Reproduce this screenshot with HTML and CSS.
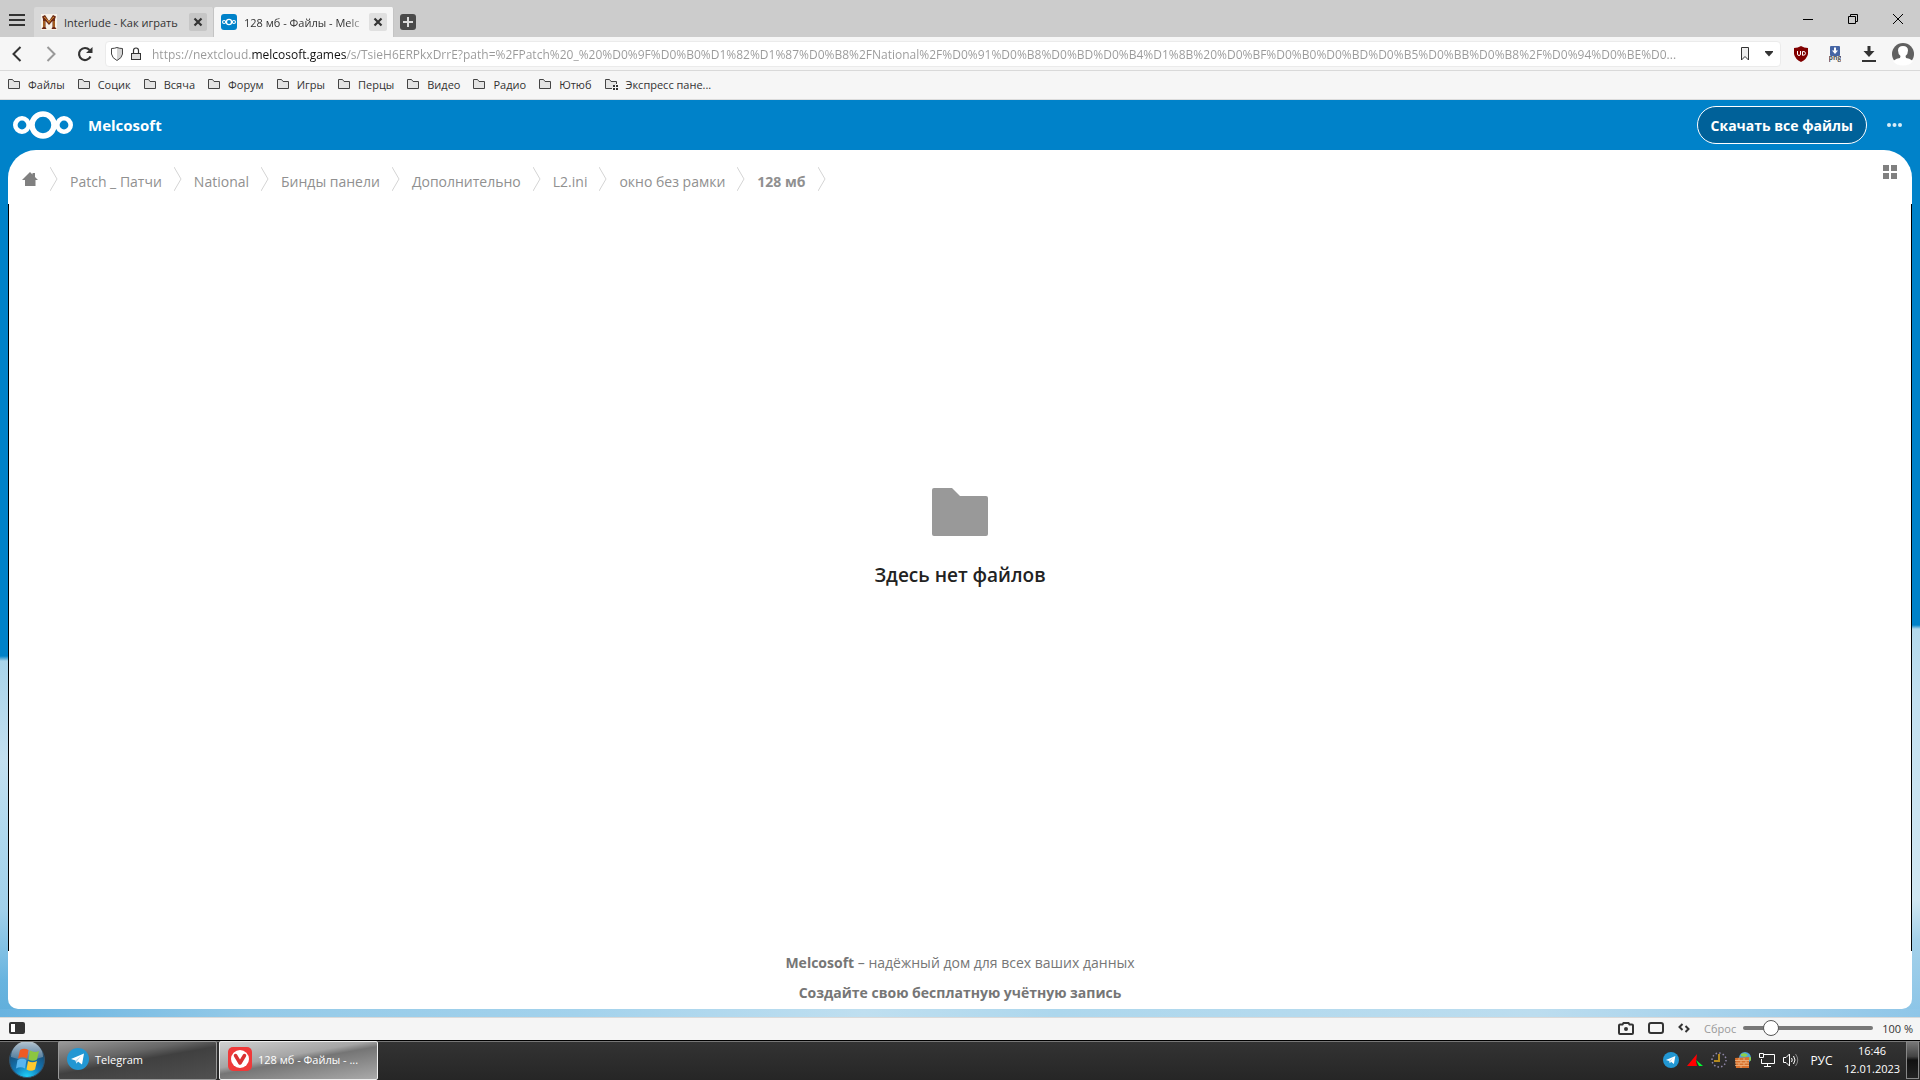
FILE: index.html
```
<!DOCTYPE html>
<html lang="ru">
<head>
    <meta charset="UTF-8">
    <meta name="viewport" content="width=device-width, initial-scale=1.0">
    <title>128 мб - Файлы - Melcosoft</title>
    <link rel="stylesheet" href="styles.css">
</head>
<body>
    <!-- shared shapes -->
    <svg class="defs" aria-hidden="true">
        <symbol id="folder" viewBox="0 0 12 10"><path d="M.5 9.500V.5H4.500L6 2.500H11.500V9.500Z" fill="#e4e4e4" stroke="#444"/></symbol>
        <symbol id="sep" viewBox="0 0 8 24"><path d="M0 0L7 12L0 24" fill="none" stroke="#d4d4d4"/></symbol>
        <symbol id="cross" viewBox="0 0 10 10"><path d="M1.500 1.500L8.500 8.500M8.500 1.500L1.500 8.500" stroke="#333" stroke-width="2.200"/></symbol>
        <symbol id="cloud" viewBox="0 0 60 28">
            <g fill="none" stroke="#fff"><circle cx="30" cy="14" r="11" stroke-width="5.500"/><circle cx="9" cy="14" r="6.700" stroke-width="4.600"/><circle cx="51" cy="14" r="6.700" stroke-width="4.600"/></g>
        </symbol>
        <symbol id="telegram" viewBox="0 0 22 22">
            <circle cx="11" cy="11" r="11" fill="#2297d3"/><path d="M4 11L17 5.500L15 16.500L11 13.500L9.500 15.500L8.500 12.500Z" fill="#fff"/><path d="M8.500 12.500L14 8L10 13.200L9.500 15.500Z" fill="#b9d9ec"/>
        </symbol>
    </svg>

    <!-- tabs -->
    <div class="tab-bar">
        <button class="menu-button" aria-label="Меню"><svg width="16" height="12"><path d="M0 1H16M0 6H16M0 11H16" stroke="#333" stroke-width="2"/></svg></button>
        <div class="tab">
            <svg width="16" height="16"><rect width="16" height="16" fill="#f7f1e8"/><path d="M1 2.500L4 1L8 7L12 1L15 2.500L14 5V13L15.500 15H10.500L11.500 13V7L8 11L4.500 7V13L5.500 15H.5L2 13V5Z" fill="#6d2a16"/><path d="M3 3L5 4.500L8 8.500L11 4.500L13 3M3 7V13M13 7V13" fill="none" stroke="#d98f2b"/></svg>
            <span class="tab-title">Interlude - Как играть</span>
            <button class="tab-close" aria-label="Закрыть вкладку"><svg width="10" height="10"><use href="#cross"/></svg></button>
        </div>
        <div class="tab active">
            <svg width="16" height="16"><rect width="16" height="16" rx="3" fill="#0082c9"/><use href="#cloud" x="1" y="4" width="14" height="8"/></svg>
            <span class="tab-title">128 мб - Файлы - Melc</span>
            <button class="tab-close" aria-label="Закрыть вкладку"><svg width="10" height="10"><use href="#cross"/></svg></button>
        </div>
        <button class="new-tab" aria-label="Новая вкладка"><svg width="16" height="16"><rect width="16" height="16" rx="3" fill="#4a4a4a"/><path d="M8 3V13M3 8H13" stroke="#ddd" stroke-width="2"/></svg></button>
        <div class="window-buttons">
            <button aria-label="Свернуть"><svg width="10" height="10"><path d="M0 5.500H10" stroke="#000"/></svg></button>
            <button aria-label="Развернуть"><svg width="10" height="10"><path d="M.5 2.500H7.500V9.500H.5ZM2.500 2.500V.5H9.500V7.500H7.500" fill="none" stroke="#000"/></svg></button>
            <button aria-label="Закрыть"><svg width="10" height="10"><path d="M0 0L10 10M10 0L0 10" stroke="#000"/></svg></button>
        </div>
    </div>

    <!-- address bar -->
    <div class="address-bar">
        <div class="nav-buttons">
            <button aria-label="Назад"><svg width="10" height="16"><path d="M8.500 1L1.500 8L8.500 15" fill="none" stroke="#333" stroke-width="2"/></svg></button>
            <button aria-label="Вперёд"><svg width="10" height="16"><path d="M1.500 1L8.500 8L1.500 15" fill="none" stroke="#999" stroke-width="2"/></svg></button>
            <button aria-label="Обновить"><svg width="16" height="16"><path d="M13.500 10.500A6 6 0 1 1 12.500 4" fill="none" stroke="#333" stroke-width="2.200"/><path d="M15.500 1V7H9Z" fill="#333"/></svg></button>
        </div>
        <div class="url-field">
            <svg width="12" height="14"><path d="M6 1H11V6Q11 11 6 13Z" fill="#d4d4d4"/><path d="M.5 1.500Q3.500 1.500 6 .5Q8.500 1.500 11.500 1.500V7Q11 11 6 13.500Q1 11 .5 7Z" fill="none" stroke="#444"/></svg>
            <svg width="10" height="14"><rect x=".5" y="6.500" width="9" height="6" fill="#ddd" stroke="#333"/><path d="M2.500 6V3.500Q2.500 1 5 1T7.500 3.500V6" fill="none" stroke="#333" stroke-width="1.200"/></svg>
            <input class="url-input" type="text" aria-label="Адрес" value="https://nextcloud.melcosoft.games/s/TsieH6ERPkxDrrE?path=%2FPatch%20_%20%D0%9F%D0%B0%D1%82%D1%87%D0%B8%2FNational%2F%D0%91%D0%B8%D0%BD%D0%B4%D1%8B%20%D0%BF%D0%B0%D0%BD%D0%B5%D0%BB%D0%B8%2F%D0%94%D0%BE%D0...">
            <button aria-label="В закладки"><svg width="8" height="14"><path d="M.5 .5H7.500V13L4 9.500L.5 13Z" fill="#eee" stroke="#333"/></svg></button>
            <button aria-label="История адресов"><svg width="8" height="6"><path d="M0 0H8V1L4 5.500L0 1Z" fill="#333"/></svg></button>
        </div>
        <div class="extensions">
            <button aria-label="uBlock"><svg width="14" height="16"><path d="M7 0Q10 2 14 2V8Q13 13 7 16Q1 13 0 8V2Q4 2 7 0Z" fill="#800000"/><path d="M3.500 5V8Q3.500 9.500 5 9.500T6.500 8V5M8.500 5.500V9.300Q11.500 9.500 11.500 7.300T8.500 5.500" fill="none" stroke="#fff"/></svg></button>
            <button aria-label="Сохранить как png"><svg width="12" height="16"><rect x="1" y="0" width="10" height="10" rx="1" fill="#4565a4"/><path d="M5 1.500H7V4.500H9L6 8L3 4.500H5Z" fill="#fff"/><text x="6" y="14" text-anchor="middle" class="png-label">png</text></svg></button>
            <button aria-label="Загрузки"><svg width="14" height="16"><path d="M5.500 0H8.500V5H12.500L7 11L1.500 5H5.500ZM0 14H14V16H0Z" fill="#333"/></svg></button>
            <button aria-label="Профиль"><svg width="22" height="24"><circle cx="11" cy="12" r="11" fill="#606060"/><path d="M1 19Q5 16 8 16L8.500 14Q6 12 6 8.500Q6 4 11 4T16 8.500Q16 12 13.500 14L14 16Q17 16 21 19Q18 23.500 11 23.500T1 19Z" fill="#fff"/></svg></button>
        </div>
    </div>

    <!-- bookmarks -->
    <nav class="bookmarks">
        <a href="#"><svg width="12" height="10"><use href="#folder"/></svg>Файлы</a>
        <a href="#"><svg width="12" height="10"><use href="#folder"/></svg>Социк</a>
        <a href="#"><svg width="12" height="10"><use href="#folder"/></svg>Всяча</a>
        <a href="#"><svg width="12" height="10"><use href="#folder"/></svg>Форум</a>
        <a href="#"><svg width="12" height="10"><use href="#folder"/></svg>Игры</a>
        <a href="#"><svg width="12" height="10"><use href="#folder"/></svg>Перцы</a>
        <a href="#"><svg width="12" height="10"><use href="#folder"/></svg>Видео</a>
        <a href="#"><svg width="12" height="10"><use href="#folder"/></svg>Радио</a>
        <a href="#"><svg width="12" height="10"><use href="#folder"/></svg>Ютюб</a>
        <a href="#"><svg width="13" height="12"><path d="M7 10.500H.5V1.500H4.500L6 3.500H11.500V6" fill="#e4e4e4" stroke="#444"/><path d="M8 7h2v2h-2zM11 7h2v2h-2zM8 10h2v2h-2zM11 10h2v2h-2z" fill="#333"/></svg>Экспресс пане...</a>
    </nav>

    <!-- nextcloud page -->
    <div class="page">
        <header class="page-header">
            <a class="brand" href="#">
                <svg width="62" height="28" viewBox="-1 0 62 28"><use href="#cloud" width="60" height="28"/></svg>
                <span>Melcosoft</span>
            </a>
            <button class="download-button">Скачать все файлы</button>
            <button class="more-button" aria-label="Ещё"><svg width="15" height="4"><g fill="#d9ecf7"><circle cx="2" cy="2" r="2"/><circle cx="7.500" cy="2" r="2"/><circle cx="13" cy="2" r="2"/></g></svg></button>
        </header>
        <main class="content">
            <div class="controls">
                <nav class="breadcrumb">
                    <a class="home" href="#" aria-label="Домой"><svg width="16" height="14"><path d="M8 0L10.500 2.500V1H13V5L16 8H13.500V14H3V8H0Z" fill="#808080"/></svg></a>
                    <svg width="8" height="24"><use href="#sep"/></svg>
                    <a href="#">Patch _ Патчи</a>
                    <svg width="8" height="24"><use href="#sep"/></svg>
                    <a href="#">National</a>
                    <svg width="8" height="24"><use href="#sep"/></svg>
                    <a href="#">Бинды панели</a>
                    <svg width="8" height="24"><use href="#sep"/></svg>
                    <a href="#">Дополнительно</a>
                    <svg width="8" height="24"><use href="#sep"/></svg>
                    <a href="#">L2.ini</a>
                    <svg width="8" height="24"><use href="#sep"/></svg>
                    <a href="#">окно без рамки</a>
                    <svg width="8" height="24"><use href="#sep"/></svg>
                    <a class="current" href="#">128 мб</a>
                    <svg width="8" height="24"><use href="#sep"/></svg>
                </nav>
                <button class="view-toggle" aria-label="Вид сеткой"><svg width="14" height="14"><path d="M0 0H6V6H0ZM8 0H14V6H8ZM0 8H6V14H0ZM8 8H14V14H8Z" fill="#808080"/></svg></button>
            </div>
            <section class="empty">
                <svg width="56" height="48"><path d="M2 0H20L28 8H54Q56 8 56 10V46Q56 48 54 48H2Q0 48 0 46V2Q0 0 2 0Z" fill="#999"/></svg>
                <h2>Здесь нет файлов</h2>
            </section>
            <footer class="page-footer">
                <p><a href="#">Melcosoft</a> – надёжный дом для всех ваших данных</p>
                <p><a href="#">Создайте свою бесплатную учётную запись</a></p>
            </footer>
        </main>
    </div>

    <!-- status bar -->
    <div class="status-bar">
        <button class="panel-toggle" aria-label="Панель"><svg width="16" height="12"><rect width="16" height="12" rx="2" fill="#333"/><rect x="2" y="2" width="4" height="8" fill="#fff"/></svg></button>
        <button aria-label="Снимок"><svg width="16" height="13"><path d="M1 3.500Q1 2.500 2 2.500H4.500L5.500 1H10.500L11.500 2.500H14Q15 2.500 15 3.500V11Q15 12 14 12H2Q1 12 1 11Z" fill="none" stroke="#333" stroke-width="2"/><circle cx="8" cy="7" r="2" fill="#333"/></svg></button>
        <button aria-label="Мозаика"><svg width="16" height="12"><rect x="1" y="1" width="14" height="10" rx="2" fill="none" stroke="#333" stroke-width="2"/></svg></button>
        <button aria-label="Эффекты"><svg width="12" height="10"><path d="M4.500 1L1.500 4L4.500 7M7.500 3L10.500 6L7.500 9" fill="none" stroke="#333" stroke-width="2"/></svg></button>
        <button class="zoom-reset">Сброс</button>
        <input class="zoom-slider" type="range" min="0" max="100" value="17" aria-label="Масштаб">
        <span class="zoom-value">100 %</span>
    </div>

    <!-- taskbar -->
    <div class="taskbar">
        <button class="start" aria-label="Пуск">
            <svg width="36" height="36">
                <defs>
                    <radialGradient id="orb" cx=".5" cy="1" r=".9"><stop offset="0" stop-color="#20d8ff"/><stop offset=".45" stop-color="#1277b5"/><stop offset="1" stop-color="#1b4266"/></radialGradient>
                    <linearGradient id="gloss" x2="0" y2="1"><stop offset="0" stop-color="#dce8f0"/><stop offset="1" stop-color="#5a7f9c"/></linearGradient>
                </defs>
                <circle cx="18" cy="18" r="17.500" fill="url(#orb)" stroke="#33536c"/>
                <path d="M2 15A16 16 0 0 1 34 15Q18 21 2 15Z" fill="url(#gloss)" opacity=".8"/>
                <path d="M11 8Q15 5.500 19.500 8L18 16.500Q13.500 14 9 16.500Z" fill="#ee5a24"/>
                <path d="M21 8.500Q25.500 11 30 9L28 17.500Q24 20 19.500 17.500Z" fill="#8cc63f"/>
                <path d="M8.500 18Q13 15.500 17.500 18L16 26.500Q11.500 24 7 26.500Z" fill="#58b5ee"/>
                <path d="M19 19Q23.500 21.500 28 19L26 27.500Q22 30 17.500 27.500Z" fill="#fdc92d"/>
            </svg>
        </button>
        <button class="task"><svg width="22" height="22"><use href="#telegram"/></svg><span>Telegram</span></button>
        <button class="task active"><svg width="24" height="24"><rect width="24" height="24" rx="5" fill="#ef3939"/><circle cx="12" cy="12" r="9" fill="#fff"/><path d="M7.500 8.500L12 16L16.500 8.500" fill="none" stroke="#d93030" stroke-width="3.500" stroke-linecap="round" stroke-linejoin="round"/></svg><span>128 мб - Файлы - ...</span></button>
        <div class="tray">
            <button aria-label="Telegram"><svg width="16" height="16"><use href="#telegram"/></svg></button>
            <button aria-label="Монитор"><svg width="16" height="12"><path d="M0 12L10 0L9 8L10 12Z" fill="#f00"/><path d="M9 6L16 12H12Z" fill="#0f3"/></svg></button>
            <button aria-label="Часы"><svg width="16" height="16"><circle cx="8" cy="8" r="7" fill="none" stroke="#8f87a8" stroke-width="1.500" stroke-dasharray="1.500 2.160"/><path d="M8 2V9H3" fill="none" stroke="#b58b1e" stroke-width="2"/></svg></button>
            <button aria-label="Брандмауэр"><svg width="16" height="16"><circle cx="10" cy="6" r="6" fill="#4fa3d8"/><path d="M6 2Q10 0 13 3L10 5L6 4ZM12 6L16 5V9Z" fill="#8bcf4b"/><path d="M0 6L14 5V16H1Z" fill="#d9702c"/><path d="M0 8.500H14M0 11H14M0 13.500H14M4 6V8M9 6V8M6 9V11M11 9V11M4 11V13M9 11V13M6 14V16" stroke="#f4c393" stroke-width=".7"/></svg></button>
            <button aria-label="Сеть"><svg width="16" height="14"><path d="M4 1.500H15.500V10.500H2.500V6M8.500 11V13M5 13.500H12M.5 .5H4.500V4.500H.5Z" fill="none" stroke="#fff"/></svg></button>
            <button aria-label="Громкость"><svg width="16" height="14"><path d="M.5 4.500H3L6.500 1V13L3 9.500H.5ZM8.500 5Q10 7 8.500 9M10.500 3Q13.500 7 10.500 11" fill="none" stroke="#fff"/><path d="M12.500 1Q17 7 12.500 13" fill="none" stroke="#888"/></svg></button>
            <button class="lang">РУС</button>
            <button class="clock"><span>16:46</span><span>12.01.2023</span></button>
            <button class="show-desktop" aria-label="Показать рабочий стол"></button>
        </div>
    </div>
</body>
</html>
```
FILE: styles.css
```
* {
    box-sizing: border-box;
}

body {
    margin: 0;
    min-height: 100vh;
    display: flex;
    flex-direction: column;
    font-family: "Open Sans", "Noto Sans", sans-serif;
    font-size: 11px;
    color: #333;
    background: #f6f6f6;
}

button, input {
    font: inherit;
    color: inherit;
    background: none;
    border: 0;
    padding: 0;
    margin: 0;
}

button {
    display: flex;
    align-items: center;
    justify-content: center;
    cursor: pointer;
}

a {
    color: inherit;
    text-decoration: none;
}

svg {
    display: block;
    flex-shrink: 0;
}

.defs {
    position: absolute;
    width: 0;
    height: 0;
}

/* tabs */
.tab-bar {
    display: flex;
    align-items: flex-end;
    height: 37px;
    background: #ccc;
}

.menu-button {
    width: 34px;
    height: 34px;
}

.tab {
    display: flex;
    align-items: center;
    width: 180px;
    height: 30px;
    padding: 0 6px 0 7px;
    background: #d9d9d9;
    border-right: 1px solid #c4c4c4;
    border-radius: 2px 2px 0 0;
}

.tab.active {
    background: #f6f6f6;
}

.tab-title {
    flex: 1;
    min-width: 0;
    margin: 0 2px 0 7px;
    white-space: nowrap;
}

.tab.active .tab-title {
    mask-image: linear-gradient(to left, transparent, #000 20px);
}

.tab-close {
    width: 18px;
    height: 18px;
    border-radius: 2px;
    background: #c6c6c6;
}

.tab.active .tab-close {
    background: #e0e0e0;
}

.new-tab {
    width: 28px;
    height: 30px;
}

.window-buttons {
    display: flex;
    align-self: flex-start;
    margin-left: auto;
}

.window-buttons button {
    width: 45px;
    height: 38px;
}

/* address bar */
.address-bar {
    display: flex;
    align-items: center;
    height: 34px;
    border-bottom: 1px solid #d9d9d9;
}

.nav-buttons {
    display: flex;
    width: 105px;
}

.nav-buttons button {
    width: 34px;
    height: 30px;
}

.url-field {
    display: flex;
    align-items: center;
    flex: 1;
    min-width: 0;
    gap: 8px;
    height: 26px;
    padding: 0 3px 0 5px;
    background: #fff;
    border: 1px solid #ebebeb;
    border-radius: 4px;
}

.url-input {
    flex: 1;
    min-width: 0;
    height: 24px;
    padding: 2px 0 0 3px;
    font-size: 12px;
    /* only the host name is dark */
    color: transparent;
    background: linear-gradient(to right, #999 102px, #111 102px 198px, #999 198px);
    -webkit-background-clip: text;
    background-clip: text;
    text-overflow: ellipsis;
}

.url-field button {
    width: 16px;
}

.extensions {
    display: flex;
    align-items: center;
    padding-left: 3px;
}

.extensions button {
    width: 34px;
    height: 30px;
}

.png-label {
    font-size: 7px;
    font-weight: 700;
    fill: #555;
}

/* bookmarks */
.bookmarks {
    display: flex;
    align-items: center;
    gap: 13px;
    height: 29px;
    padding: 0 8px 2px;
    border-bottom: 1px solid #dcdcdc;
}

.bookmarks a {
    display: flex;
    align-items: center;
    gap: 8px;
    white-space: nowrap;
}

/* nextcloud page */
.page {
    flex: 1;
    display: flex;
    flex-direction: column;
    padding: 0 8px 8px;
    background:
        linear-gradient(to right, #68b3e0, #94cae8 13%, #a3d2ec 30%, #bfdff0 45%, #add7ed 55%, #bcddef 80%, #8fc6e8) bottom / 100% 8px no-repeat,
        linear-gradient(#0082c9 556px, #a9d4ea 561px, #c3e0f0 660px, #aed8ee 740px, #a1d0ea 810px, #68b4df 880px, #60aedb) left / 50% 100% no-repeat,
        linear-gradient(#0082c9 525px, #b3d9ec 529px, #c2e0f0 600px, #d0e7f2 800px, #a4d1ea 840px, #8ac4e7) right / 50% 100% no-repeat;
}

.page-header {
    display: flex;
    align-items: center;
    height: 50px;
    color: #fff;
    font-weight: 700;
}

.brand {
    display: flex;
    align-items: center;
    gap: 14px;
    margin-right: auto;
    padding-left: 4px;
    font-size: 15px;
}

.download-button {
    height: 38px;
    padding: 0 13px;
    border: 1px solid #fff;
    border-radius: 19px;
    background: #006199;
    font-size: 14px;
    font-weight: 700;
}

.more-button {
    width: 36px;
    height: 44px;
    margin-left: 9px;
}

.content {
    flex: 1;
    display: flex;
    flex-direction: column;
    background: #fff;
    border-radius: 28px 28px 10px 10px;
}

.controls {
    display: flex;
    justify-content: space-between;
    height: 54px;
    padding: 0 14px;
}

.breadcrumb {
    display: flex;
    align-items: center;
    gap: 12px;
    height: 58px;
    color: #909090;
    font-size: 14px;
}

.breadcrumb a {
    padding-top: 4px;
}

.breadcrumb .home {
    padding-top: 0;
}

.current {
    font-weight: 700;
}

.view-toggle {
    width: 16px;
    height: 44px;
}

.empty {
    flex: 1;
    display: flex;
    flex-direction: column;
    align-items: center;
    justify-content: center;
    padding-bottom: 76px;
    border: solid #000;
    border-width: 0 1px;
}

.empty h2 {
    margin: 22px 0 0;
    color: #222;
    font-size: 19px;
    font-weight: 600;
    line-height: 34px;
}

.page-footer {
    display: flex;
    flex-direction: column;
    gap: 6px;
    padding-bottom: 4px;
    color: #767676;
    font-size: 14px;
    line-height: 24px;
    text-align: center;
}

.page-footer p {
    margin: 0;
}

.page-footer a {
    font-weight: 700;
}

/* status bar */
.status-bar {
    display: flex;
    align-items: center;
    gap: 14px;
    height: 23px;
    padding: 0 7px 2px 9px;
    background: #f5f5f5;
    border-top: 1px solid #d9d9d9;
}

.panel-toggle {
    margin-right: auto;
}

.zoom-reset {
    color: #999;
}

.zoom-slider {
    width: 130px;
    height: 16px;
    margin: 0 -5px 0 -7px;
    appearance: none;
}

.zoom-slider::-webkit-slider-runnable-track {
    height: 4px;
    border-radius: 2px;
    background: #777;
}

.zoom-slider::-webkit-slider-thumb {
    appearance: none;
    width: 16px;
    height: 16px;
    margin-top: -6px;
    border: 1px solid #555;
    border-radius: 50%;
    background: #fff;
}

/* taskbar */
.taskbar {
    display: flex;
    align-items: center;
    height: 40px;
    background: linear-gradient(#000 1px, #777 1px 2px, #333 2px, #262626);
    color: #fff;
}

.start {
    width: 58px;
    height: 38px;
    padding-right: 4px;
}

.task {
    justify-content: flex-start;
    gap: 6px;
    width: 159px;
    height: 39px;
    margin-right: 2px;
    padding: 0 8px 2px;
    border: 1px solid #999;
    border-radius: 2px;
    background: linear-gradient(170deg, #999 0, #666 35%, #404040 50%, #505050);
    white-space: nowrap;
}

.task.active {
    border-color: #eee;
    background: linear-gradient(170deg, #d0d0d0 0, #a5a5a5 40%, #757575 50%, #aaa);
}

.tray {
    display: flex;
    align-items: center;
    margin-left: auto;
    height: 40px;
}

.tray button {
    width: 24px;
    height: 36px;
}

.tray .lang {
    width: 37px;
    font-size: 12px;
}

.tray .clock {
    flex-direction: column;
    width: 64px;
    font-size: 11px;
    line-height: 18px;
}

.tray .show-desktop {
    width: 13px;
    height: 38px;
    margin: 0 1px 0 2px;
    border: 1px solid #888;
    background: linear-gradient(#777, #444 40%, #111 50%, #222);
}
```
